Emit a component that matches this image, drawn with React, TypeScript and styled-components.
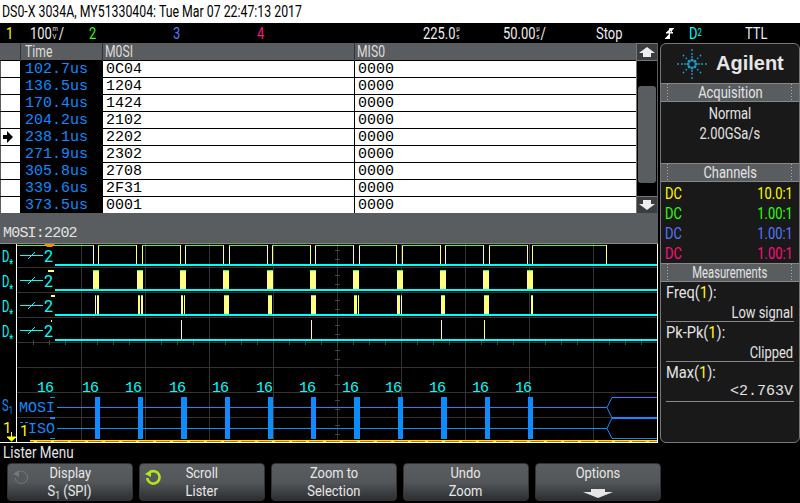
import React from 'react';
import styled, {createGlobalStyle} from 'styled-components';

const UI_FONT = 'Roboto, "Liberation Sans", sans-serif';
const MONO_FONT = '"Liberation Mono", monospace';

const GlobalStyle = createGlobalStyle`
  html, body {
    margin: 0;
    padding: 0;
    background: #000;
  }
`

const rows = [
    {time: '102.7us', mosi: '0C04', miso: '0000'},
    {time: '136.5us', mosi: '1204', miso: '0000'},
    {time: '170.4us', mosi: '1424', miso: '0000'},
    {time: '204.2us', mosi: '2102', miso: '0000'},
    {time: '238.1us', mosi: '2202', miso: '0000', current: true},
    {time: '271.9us', mosi: '2302', miso: '0000'},
    {time: '305.8us', mosi: '2708', miso: '0000'},
    {time: '339.6us', mosi: '2F31', miso: '0000'},
    {time: '373.5us', mosi: '0001', miso: '0000'},
]

const channels = [
    {color: '#ffff00', ratio: '10.0:1'},
    {color: '#33ff00', ratio: '1.00:1'},
    {color: '#5577ff', ratio: '1.00:1'},
    {color: '#ff0f7f', ratio: '1.00:1'},
]

const measurements = [
    {name: 'Freq', value: 'Low signal'},
    {name: 'Pk-Pk', value: 'Clipped'},
    {name: 'Max', value: '<2.763V', mono: true},
]

// waveform numbers, all read off the screen in px
const clockEdges = [93, 98, 136, 142, 180, 185, 223, 229, 267, 272, 310, 315, 353, 359, 396, 402, 440, 445, 483, 489, 527, 532, 606]
const row2Blocks = [93, 137, 180, 223, 267, 310, 353, 397, 440, 483, 527]
const row3Blocks = [[95, 1], [97, 2], [138, 2], [141, 2], [181, 2], [184, 1], [224, 5], [268, 4], [311, 5], [354, 3], [358, 1], [397, 3], [401, 1], [441, 4], [484, 5], [531, 2]]
const row4Lines = [181, 311, 441, 484]
const busBars = [[95, 5], [138, 5], [181, 6], [225, 5], [268, 5], [311, 5], [354, 6], [398, 5], [441, 6], [485, 5], [528, 5]]
const busCounts = [45, 90, 133, 177, 220, 264, 307, 350, 393, 437, 480, 523]
const gridX = [81, 145, 209, 273, 337, 401, 465, 529, 593]
const gridY = [267, 292, 317, 342, 367, 392, 417]

const BLUE = '#0d8bff'
const CYAN = '#00ffff'
const YELLOW = '#ffff80'

const Unit = ({top, bottom}: {top: string, bottom: string}) => (
    <UnitStack>
        <span>{top}</span>
        <span>{bottom}</span>
    </UnitStack>
)

const AgilentLogo = () => {
    const dots: React.ReactElement[] = []
    for (let i = 0; i < 8; i++) {
        const angle = i * Math.PI / 4
        const radii = i % 2 === 0 ? [4, 7, 10, 14] : [4, 8, 12]
        radii.forEach((r, n) => {
            dots.push(<circle key={i + '-' + n} cx={16 + Math.cos(angle) * r} cy={16 + Math.sin(angle) * r}
                              r={n === 0 ? 1.5 : 0.9} fill="#1f9ccb"/>)
        })
    }
    return <svg width="32" height="32" viewBox="0 0 32 32">{dots}</svg>
}

const Knob = ({dim}: {dim?: boolean}) => (
    <KnobIcon width="18" height="18" viewBox="0 0 18 18">
        <path d="M5.5 4.5 A6.2 6.2 0 1 1 3.2 10" fill="none" stroke={dim ? '#777' : '#b4e61a'} strokeWidth={dim ? 1 : 2.6}/>
        <path d="M1 6 L7 2 L7 9 Z" fill={dim ? '#777' : '#b4e61a'}/>
    </KnobIcon>
)

const ScopeDisplay = () => (
    <svg width="658" height="199" viewBox="0 244 658 199" style={{display: 'block'}}>
        {gridX.map(x => <line key={x} x1={x + .5} x2={x + .5} y1={244} y2={441} stroke="#333"/>)}
        {gridY.map(y => <line key={y} x1={17} x2={657} y1={y + .5} y2={y + .5} stroke="#333"/>)}
        {Array.from({length: 39}, (_, i) => 33 + i * 16).map(x =>
            <line key={x} x1={x + .5} x2={x + .5} y1={340} y2={345} stroke="#444"/>)}
        {Array.from({length: 20}, (_, i) => 250 + Math.floor(i / 2) * 25 + (i % 2) * 9).map(y =>
            <line key={y} x1={335} x2={340} y1={y + .5} y2={y + .5} stroke="#444"/>)}

        {/* digital channels */}
        {[264, 289, 314, 339].map(y =>
            <rect key={y} x={55} y={y} width={602} height={2} fill={CYAN}/>)}
        <rect x={17} y={245} width={76} height={1} fill="#33ff66"/>
        {clockEdges.map((x, i) => (
            <g key={x}>
                <rect x={x} y={245} width={1} height={19} fill={YELLOW}/>
                {i % 2 === 1 && i < clockEdges.length - 1 &&
                    <rect x={x} y={245} width={clockEdges[i + 1] - x} height={1} fill="#33ff66"/>}
            </g>
        ))}
        {row2Blocks.map(x => (
            <g key={x}>
                <rect x={x} y={270} width={6} height={19} fill={YELLOW}/>
                <rect x={x} y={270} width={6} height={1} fill="#33ff66"/>
            </g>
        ))}
        {row3Blocks.map(([x, w]) => (
            <g key={x}>
                <rect x={x} y={295} width={w} height={19} fill={YELLOW}/>
                <rect x={x} y={295} width={w} height={1} fill="#33ff66"/>
            </g>
        ))}
        {row4Lines.map(x => <rect key={x} x={x} y={320} width={1} height={19} fill={YELLOW}/>)}
        <rect x={48} y={270} width={6} height={2} fill={YELLOW}/>
        <rect x={51} y={295} width={4} height={2} fill={YELLOW}/>
        <rect x={51} y={320} width={1} height={2} fill={YELLOW}/>

        {/* channel labels */}
        {[0, 25, 50, 75].map(dy => (
            <g key={dy} fill={CYAN} stroke="none">
                <ScopeText transform={`translate(2 ${262 + dy}) scale(.7 1)`} fontSize={16}>
                    D<tspan dy={6} fontSize={13}>*</tspan>
                </ScopeText>
                <rect x={20} y={255 + dy} width={23} height={1}/>
                <line x1={28} x2={35} y1={259 + dy} y2={252 + dy} stroke={CYAN}/>
                <ScopeText x={44} y={262 + dy} fontSize={16}>2</ScopeText>
            </g>
        ))}

        {/* serial bus */}
        {busCounts.map(x => <BusText key={x} x={x} y={392} fill={CYAN} textAnchor="middle">16</BusText>)}
        <rect x={57} y={407} width={550} height={1} fill={BLUE}/>
        <rect x={57} y={428} width={550} height={1} fill={BLUE}/>
        {busBars.map(([x, w]) => <rect key={x} x={x} y={397} width={w} height={42} fill={BLUE}/>)}
        <path d="M657 397.5 H612 L607 407.5 L612 418 L607 428.5 L612 438.5 H657"
              fill="none" stroke={BLUE} strokeWidth={1}/>
        <rect x={612} y={417} width={45} height={2} fill={BLUE}/>
        <rect x={50} y={397} width={5} height={1} fill={BLUE}/>
        <rect x={50} y={417} width={5} height={2} fill={BLUE}/>
        <rect x={50} y={438} width={5} height={1} fill={BLUE}/>
        <BusLabel x={19} y={412} fill={BLUE}>MOSI</BusLabel>
        <BusLabel x={28} y={433} fill={BLUE}>ISO</BusLabel>
        <rect x={20} y={422} width={3} height={1} fill={BLUE}/>
        <rect x={25} y={422} width={3} height={1} fill={BLUE}/>
        <ScopeText transform="translate(2 411) scale(.7 1)" fontSize={16} fill={BLUE}>
            S<tspan dy={3} fontSize={11}>1</tspan>
        </ScopeText>
        <ScopeText x={3} y={433} fontSize={15} fill="#ffff00">1</ScopeText>
        <ScopeText x={20} y={436} fontSize={15} fill="#ffff00">1</ScopeText>
        <path d="M11.5 432 V437 M7 437 H16 L11.5 441 Z" fill="#ffff00" stroke="#ffff00" strokeWidth={1}/>

        {/* ground line and frame */}
        <rect x={30} y={440} width={627} height={1} fill="#ffe600"/>
        <line x1={30} x2={657} y1={441.5} y2={441.5} stroke="#f05a00"/>
        <line x1={34} x2={657} y1={441.5} y2={441.5} stroke="#ffe600" strokeDasharray="3 14"/>
        <rect x={16} y={244} width={1} height={198} fill="#fff"/>
        <rect x={657} y={244} width={1} height={199} fill="#fff"/>
        <rect x={0} y={442} width={658} height={1} fill="#fff"/>
        <path d="M44 244 H55 L52 247 H47 Z" fill="#ff8a00"/>
    </svg>
)

const App = () => (
    <Screen>
        <GlobalStyle/>
        <TitleBar><Narrow $sx={.77}>DS0-X 3034A, MY51330404: Tue Mar 07 22:47:13 2017</Narrow></TitleBar>
        <StatusBar>
            <StatusItem $w={24} color="#ffff00">1</StatusItem>
            <StatusItem $w={59}>100<Unit top="m" bottom="V"/>/</StatusItem>
            <StatusItem $w={84} color="#33ff00">2</StatusItem>
            <StatusItem $w={84} color="#5577ff">3</StatusItem>
            <StatusItem $w={166} color="#ff0f7f">4</StatusItem>
            <StatusItem $w={80}>225.0<Unit top="µ" bottom="s"/></StatusItem>
            <StatusItem $w={93}>50.00<Unit top="µ" bottom="s"/>/</StatusItem>
            <StatusItem $w={69}>Stop</StatusItem>
            <TriggerSlot>
                <svg width="9" height="13" viewBox="0 0 9 13">
                    <path d="M0 11.5 H4.5 V1.5 H9 M1 6 H8 L4.5 3 Z" fill="#fff" stroke="#fff"/>
                </svg>
            </TriggerSlot>
            <StatusItem $w={56} color={CYAN}>D<Sub>2</Sub></StatusItem>
            <StatusItem $w={40}>TTL</StatusItem>
        </StatusBar>
        <Main>
            <LeftColumn>
                <ListerArea>
                    <Lister>
                        <ListerHeader>
                            <HeaderCell/>
                            <HeaderCell><Narrow>Time</Narrow></HeaderCell>
                            <HeaderCell><Narrow>M0SI</Narrow></HeaderCell>
                            <HeaderCell><Narrow>MIS0</Narrow></HeaderCell>
                        </ListerHeader>
                        {rows.map(r => (
                            <ListerRow key={r.time}>
                                <MarkerCell>{r.current &&
                                    <svg width="10" height="12" viewBox="0 0 10 12">
                                        <path d="M0 4 H4 V0 L10 6 L4 12 V8 H0 Z" fill="#000"/>
                                    </svg>}
                                </MarkerCell>
                                <TimeCell>{r.time}</TimeCell>
                                <ValueCell>{r.mosi}</ValueCell>
                                <ValueCell>{r.miso}</ValueCell>
                            </ListerRow>
                        ))}
                    </Lister>
                    <ScrollBar>
                        <ScrollButton>
                            <svg width="16" height="10" viewBox="0 0 16 10">
                                <path d="M8 0 L16 6 H12 V10 H4 V6 H0 Z" fill="#eee"/>
                            </svg>
                        </ScrollButton>
                        <ScrollTrack>
                            <ScrollThumb/>
                        </ScrollTrack>
                        <ScrollButton>
                            <svg width="16" height="10" viewBox="0 0 16 10">
                                <path d="M8 10 L16 4 H12 V0 H4 V4 H0 Z" fill="#eee"/>
                            </svg>
                        </ScrollButton>
                    </ScrollBar>
                </ListerArea>
                <DecodeBar>M0SI:2202</DecodeBar>
                <ScopeDisplay/>
            </LeftColumn>
            <SidePanel>
                <LogoBlock>
                    <AgilentLogo/>
                    <LogoText>Agilent</LogoText>
                </LogoBlock>
                <SectionHeader><Narrow $origin="center">Acquisition</Narrow></SectionHeader>
                <AcquisitionBlock>
                    <div><Narrow $origin="center">Normal</Narrow></div>
                    <div><Narrow $origin="center">2.00GSa/s</Narrow></div>
                </AcquisitionBlock>
                <SectionHeader><Narrow $origin="center">Channels</Narrow></SectionHeader>
                <ChannelList>
                    {channels.map(c => (
                        <ChannelRow key={c.color} color={c.color}>
                            <Narrow>DC</Narrow>
                            <Narrow $origin="right">{c.ratio}</Narrow>
                        </ChannelRow>
                    ))}
                </ChannelList>
                <SectionHeader><Narrow $origin="center" $sx={.66}>Measurements</Narrow></SectionHeader>
                {measurements.map(m => (
                    <Measurement key={m.name}>
                        <div><Narrow $sx={.86}>{m.name}(<OneMark>1</OneMark>):</Narrow></div>
                        {m.mono
                            ? <MonoValue>{m.value}</MonoValue>
                            : <MeasurementValue><Narrow $origin="right">{m.value}</Narrow></MeasurementValue>}
                    </Measurement>
                ))}
            </SidePanel>
        </Main>
        <MenuTitle><Narrow $sx={.84}>Lister Menu</Narrow></MenuTitle>
        <SoftKeys>
            <SoftKey>
                <Knob dim/>
                <Narrow $origin="center" $sx={.86}>Display</Narrow>
                <Narrow $origin="center" $sx={.86}>S<Sub>1</Sub> (SPI)</Narrow>
            </SoftKey>
            <SoftKey>
                <Knob/>
                <Narrow $origin="center" $sx={.86}>Scroll</Narrow>
                <Narrow $origin="center" $sx={.86}>Lister</Narrow>
            </SoftKey>
            <SoftKey>
                <Narrow $origin="center" $sx={.86}>Zoom to</Narrow>
                <Narrow $origin="center" $sx={.86}>Selection</Narrow>
            </SoftKey>
            <SoftKey>
                <Narrow $origin="center" $sx={.86}>Undo</Narrow>
                <Narrow $origin="center" $sx={.86}>Zoom</Narrow>
            </SoftKey>
            <SoftKey>
                <Narrow $origin="center" $sx={.86}>Options</Narrow>
                <OptionsArrow width="30" height="9" viewBox="0 0 30 9">
                    <path d="M8 0 H22 V3 H30 L15 9 L0 3 H8 Z" fill="#e6e6e6"/>
                </OptionsArrow>
            </SoftKey>
        </SoftKeys>
    </Screen>
)

export default App

const Screen = styled.div`
  width: 800px;
  height: 503px;
  overflow: hidden;
  background: #000;
  font-family: ${UI_FONT};
  color: #e4e4e4;
`

// the scope's own font is much narrower than anything installed, so squeeze it
const Narrow = styled.span<{$origin?: string, $sx?: number}>`
  display: inline-block;
  white-space: nowrap;
  transform: scaleX(${({$sx}) => $sx || .76});
  transform-origin: ${({$origin}) => $origin || 'left'} center;
`

const TitleBar = styled.div`
  height: 23px;
  line-height: 24px;
  padding-left: 2px;
  background: #fff;
  color: #000;
  font-size: 16px;
`

const StatusBar = styled.div`
  height: 20px;
  padding-left: 6px;
  display: flex;
  align-items: center;
  font-size: 17px;
`

const StatusItem = styled.div<{$w: number, color?: string}>`
  width: ${({$w}) => $w}px;
  flex: none;
  display: flex;
  align-items: center;
  white-space: nowrap;
  color: ${({color}) => color || '#eeeeee'};
  transform: scaleX(.76);
  transform-origin: left center;
`

const TriggerSlot = styled.div`
  width: 24px;
  flex: none;
  display: flex;
  align-items: center;
`

const UnitStack = styled.span`
  display: inline-flex;
  flex-direction: column;
  font-size: 8px;
  line-height: 8px;
  margin: 0 1px;
`

const Sub = styled.sub`
  font-size: 10px;
  line-height: 0;
  vertical-align: -3px;
`

const Main = styled.div`
  height: 400px;
  display: flex;
`

const LeftColumn = styled.div`
  width: 658px;
  margin-right: 2px;
  flex: none;
`

const ListerArea = styled.div`
  height: 170px;
  display: flex;
`

const Lister = styled.div`
  width: 636px;
  background: #5a5d5f;
`

const ListerHeader = styled.div`
  height: 17px;
  display: grid;
  grid-template-columns: 20px 82px 252px 282px;
  background: #5a5d5f;
`

const HeaderCell = styled.div`
  padding-left: 4px;
  border-left: 1px solid #333;
  line-height: 18px;
  font-size: 16px;
  color: #ddd;
  &:first-child {
    border-left: 0;
  }
  &:nth-child(n + 3) {
    padding-left: 2px;
  }
`

const ListerRow = styled.div`
  height: 16px;
  display: grid;
  grid-template-columns: 20px 82px 252px 282px;
  grid-template-rows: 16px;
  border-top: 1px solid #000;
  font-family: ${MONO_FONT};
  font-size: 15px;
  line-height: 18px;
`

const MarkerCell = styled.div`
  margin-left: 1px;
  background: #fff;
  display: flex;
  align-items: center;
  padding-left: 2px;
`

const TimeCell = styled.div`
  background: #000;
  color: ${BLUE};
  padding-left: 5px;
`

const ValueCell = styled.div`
  background: #fff;
  color: #000;
  border-left: 1px solid #000;
  padding-left: 3px;
`

const ScrollBar = styled.div`
  width: 22px;
  display: flex;
  flex-direction: column;
  background: #000;
  border-left: 1px solid #777;
  border-right: 1px solid #5a5d5f;
  box-sizing: border-box;
`

const ScrollButton = styled.div`
  height: 17px;
  flex: none;
  background: #3a3c3e;
  border-top: 1px solid #777;
  box-sizing: border-box;
  display: flex;
  align-items: center;
  justify-content: center;
`

const ScrollTrack = styled.div`
  flex: 1;
  padding: 25px 1px 13px;
  border-top: 1px solid #777;
`

const ScrollThumb = styled.div`
  height: 100%;
  background: #5a5d5f;
  border-radius: 3px;
`

const DecodeBar = styled.div`
  height: 31px;
  box-sizing: border-box;
  padding: 11px 0 0 3px;
  background: #5a5d5f;
  border-bottom: 1px solid #888;
  font-family: ${MONO_FONT};
  font-size: 15px;
  letter-spacing: -.8px;
  line-height: 19px;
  color: #e4e4e4;
`

const ScopeText = styled.text`
  font-family: ${UI_FONT};
`

const BusText = styled.text`
  font-family: ${MONO_FONT};
  font-size: 15px;
  letter-spacing: -1px;
`

const BusLabel = styled.text`
  font-family: ${MONO_FONT};
  font-size: 15px;
`

const SidePanel = styled.div`
  width: 140px;
  height: 400px;
  flex: none;
  box-sizing: border-box;
  background: #191919;
  border: 1px solid #777;
  border-radius: 6px;
  font-size: 17px;
`

const LogoBlock = styled.div`
  height: 39px;
  display: flex;
  align-items: center;
  padding-left: 15px;
  gap: 8px;
`

const LogoText = styled.div`
  font-family: "Liberation Sans", sans-serif;
  font-weight: bold;
  font-size: 20px;
  color: #e6e6e6;
`

const SectionHeader = styled.div`
  height: 19px;
  box-sizing: border-box;
  background: #5a5d5f;
  border-top: 1px solid #888;
  border-bottom: 1px solid #888;
  text-align: center;
  line-height: 17px;
  color: #e4e4e4;
  background-image:
    radial-gradient(circle, #aaa 0.6px, transparent 0.8px),
    radial-gradient(circle, #aaa 0.6px, transparent 0.8px);
  background-size: 3px 3px, 3px 3px;
  background-repeat: repeat-y;
  background-position: 5px 2px, 129px 2px;
`

const AcquisitionBlock = styled.div`
  height: 61px;
  padding-top: 1px;
  box-sizing: border-box;
  text-align: center;
  line-height: 20px;
`

const ChannelList = styled.div`
  height: 81px;
  padding: 1px 6px 0 4px;
  box-sizing: border-box;
`

const ChannelRow = styled.div<{color: string}>`
  height: 20px;
  display: flex;
  justify-content: space-between;
  align-items: center;
  color: ${({color}) => color};
`

const Measurement = styled.div`
  height: 40px;
  margin: 0 5px;
  box-sizing: border-box;
  border-bottom: 1px solid #888;
  line-height: 20px;
`

const OneMark = styled.span`
  color: #ffff00;
`

const MeasurementValue = styled.div`
  text-align: right;
  padding-right: 1px;
`

const MonoValue = styled.div`
  text-align: right;
  padding-right: 1px;
  font-family: ${MONO_FONT};
  font-size: 15px;
`

const MenuTitle = styled.div`
  height: 20px;
  padding-left: 3px;
  line-height: 19px;
  font-size: 16px;
  color: #e4e4e4;
`

const SoftKeys = styled.div`
  display: flex;
  gap: 6px;
  padding-left: 7px;
`

const SoftKey = styled.div`
  position: relative;
  width: 126px;
  height: 38px;
  box-sizing: border-box;
  border: 1px solid #333;
  border-radius: 4px;
  background: linear-gradient(#5a5d5f 0%, #54575a 50%, #2c2f32 100%);
  display: flex;
  flex-direction: column;
  align-items: center;
  font-size: 15px;
  line-height: 18px;
  color: #e8e8e8;
`

const OptionsArrow = styled.svg`
  margin-top: 7px;
`

const KnobIcon = styled.svg`
  position: absolute;
  left: 4px;
  top: 4px;
`
